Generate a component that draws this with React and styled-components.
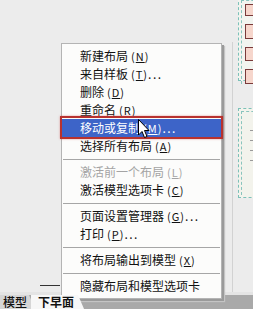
import React from "react";
import styled, { createGlobalStyle } from "styled-components";

const Global = createGlobalStyle`
  html, body { margin: 0; padding: 0; background: #ececec; }
  body { width: 253px; height: 309px; overflow: hidden; }
`;

const Page = styled.div`
  position: relative;
  width: 253px;
  height: 309px;
  display: flex;
  flex-direction: column;
  background: #ececec;
  font-family: "Noto Sans CJK SC", "Noto Sans", sans-serif;
  overflow: hidden;
`;

const Canvas = styled.div`
  position: relative;
  flex: 1;
  background: #ececec;
`;

const PaperEdge = styled.div`
  position: absolute;
  left: 232px;
  top: 42px;
  width: 1px;
  height: 250px;
  background: #d2d2d2;
`;

const Viewport = styled.div`
  position: absolute;
  left: ${(p) => p.x}px;
  top: ${(p) => p.y}px;
  width: ${(p) => p.w}px;
  height: ${(p) => p.h}px;
  border: 1px dashed #7cc0b8;
  background: ${(p) => p.bg};
  box-sizing: border-box;
  padding: 2px;
  display: flex;
  flex-direction: column;
`;

const InnerDash = styled.div`
  flex: 1;
  border-left: 1px dashed #8ac4bd;
  border-top: 1px dashed #8ac4bd;
  display: flex;
  flex-direction: column;
  gap: ${(p) => p.gap}px;
  padding: ${(p) => p.pad};
`;

const Block = styled.div`
  height: ${(p) => p.h}px;
  margin-left: 3px;
  border: 1px solid #7a3a3a;
  background: #f6d6cc;
`;

const Tick = styled.div`
  height: 1px;
  width: 8px;
  margin-left: 8px;
  background: #9a9a9a;
`;

const Dash = styled.div`
  position: absolute;
  left: 40px;
  top: 285px;
  width: 20px;
  height: 1px;
  background: #333;
`;

const TabBar = styled.div`
  height: 17px;
  display: flex;
  align-items: flex-end;
  background: linear-gradient(#e4e4e4 0 3px, #a9a9a9 3px);
  overflow: hidden;
`;

const Tab = styled.div`
  height: 14px;
  padding: 0 ${(p) => (p.active ? 10 : 8)}px 0 ${(p) => (p.active ? 7 : 3)}px;
  margin-left: ${(p) => (p.active ? -4 : 0)}px;
  background: ${(p) => (p.active ? "#f7f7f7" : "#d6d6d6")};
  clip-path: polygon(0 0, calc(100% - 6px) 0, 100% 100%, 0 100%);
  font-size: 12px;
  font-weight: ${(p) => (p.active ? 700 : 500)};
  line-height: 14px;
  color: #111;
  white-space: nowrap;
  z-index: ${(p) => (p.active ? 1 : 0)};
`;

const Menu = styled.div`
  position: absolute;
  left: 61px;
  top: 43px;
  width: 161px;
  box-sizing: border-box;
  background: #fcfcfb;
  border: 1px solid #b4b4b4;
  padding: 3px 0 3px 0;
  box-shadow: 2px 2px 0 #9a9a9a, 3px 3px 1px #c4c4c4;
  display: flex;
  flex-direction: column;
`;

const Item = styled.div`
  position: relative;
  height: 18px;
  display: flex;
  align-items: center;
  padding-left: 18px;
  font-size: 12px;
  line-height: 18px;
  white-space: nowrap;
  color: ${(p) => (p.disabled ? "#a4a4a4" : p.active ? "#ffffff" : "#111")};
  background: ${(p) => (p.active ? "#3d64c8" : "transparent")};
`;

const Highlight = styled.div`
  position: absolute;
  left: -2px;
  right: -2px;
  top: -3px;
  bottom: -2px;
  border: 2px solid #b8322e;
  box-shadow: 0 0 2px rgba(200, 60, 60, 0.5);
  pointer-events: none;
`;

const Key = styled.span`
  margin-left: 3px;
  font-size: 11px;
  letter-spacing: 1px;
  u {
    text-decoration-thickness: 1px;
    text-underline-offset: 1px;
  }
`;

const Dots = styled.span`
  letter-spacing: 1.5px;
`;

const Sep = styled.div`
  height: 8px;
  display: flex;
  align-items: center;
  padding: 0 1px;
  &::after {
    content: "";
    flex: 1;
    height: 1px;
    background: #a6a6a6;
  }
`;

const Cursor = styled.svg`
  position: absolute;
  left: 138px;
  top: 119px;
`;

const items = [
  { t: "新建布局", k: "N" },
  { t: "来自样板", k: "T", dots: true },
  { t: "删除", k: "D" },
  { t: "重命名", k: "R" },
  { t: "移动或复制", k: "M", dots: true, active: true },
  { t: "选择所有布局", k: "A" },
  "sep",
  { t: "激活前一个布局", k: "L", disabled: true },
  { t: "激活模型选项卡", k: "C" },
  "sep",
  { t: "页面设置管理器", k: "G", dots: true },
  { t: "打印", k: "P", dots: true },
  "sep",
  { t: "将布局输出到模型", k: "X" },
  "sep",
  { t: "隐藏布局和模型选项卡" },
];

export default function App() {
  return (
    <>
      <Global />
      <Page>
        <Canvas>
          <PaperEdge />
          <Viewport x={238} y={-3} w={40} h={84} bg="#f2f4ef">
            <InnerDash gap={8} pad="3px 0 0 0">
              <Block h={10} />
              <Block h={13} />
              <Block h={12} />
              <Block h={13} />
            </InnerDash>
          </Viewport>
          <Viewport x={238} y={108} w={40} h={90} bg="#f3f3ec">
            <InnerDash gap={9} pad="18px 0 0 0">
              <Tick />
              <Tick />
              <Tick />
              <Tick />
            </InnerDash>
          </Viewport>
          <Dash />
        </Canvas>
        <TabBar>
          <Tab>模型</Tab>
          <Tab active>下早面</Tab>
        </TabBar>
        <Menu>
          {items.map((it, i) =>
            it === "sep" ? (
              <Sep key={i} />
            ) : (
              <Item key={i} active={it.active} disabled={it.disabled}>
                {it.t}
                {it.k && (
                  <Key>
                    (<u>{it.k}</u>)
                  </Key>
                )}
                {it.dots && <Dots>...</Dots>}
                {it.active && <Highlight />}
              </Item>
            )
          )}
        </Menu>
        <Cursor width="12" height="20" viewBox="0 0 12 20">
          <path
            d="M0.5 0.5 L0.5 16 L4 12.5 L6.5 18.5 L9 17.5 L6.5 11.5 L11 11.5 Z"
            fill="#fff"
            stroke="#000"
            strokeWidth="1"
            strokeLinejoin="miter"
          />
        </Cursor>
      </Page>
    </>
  );
}
